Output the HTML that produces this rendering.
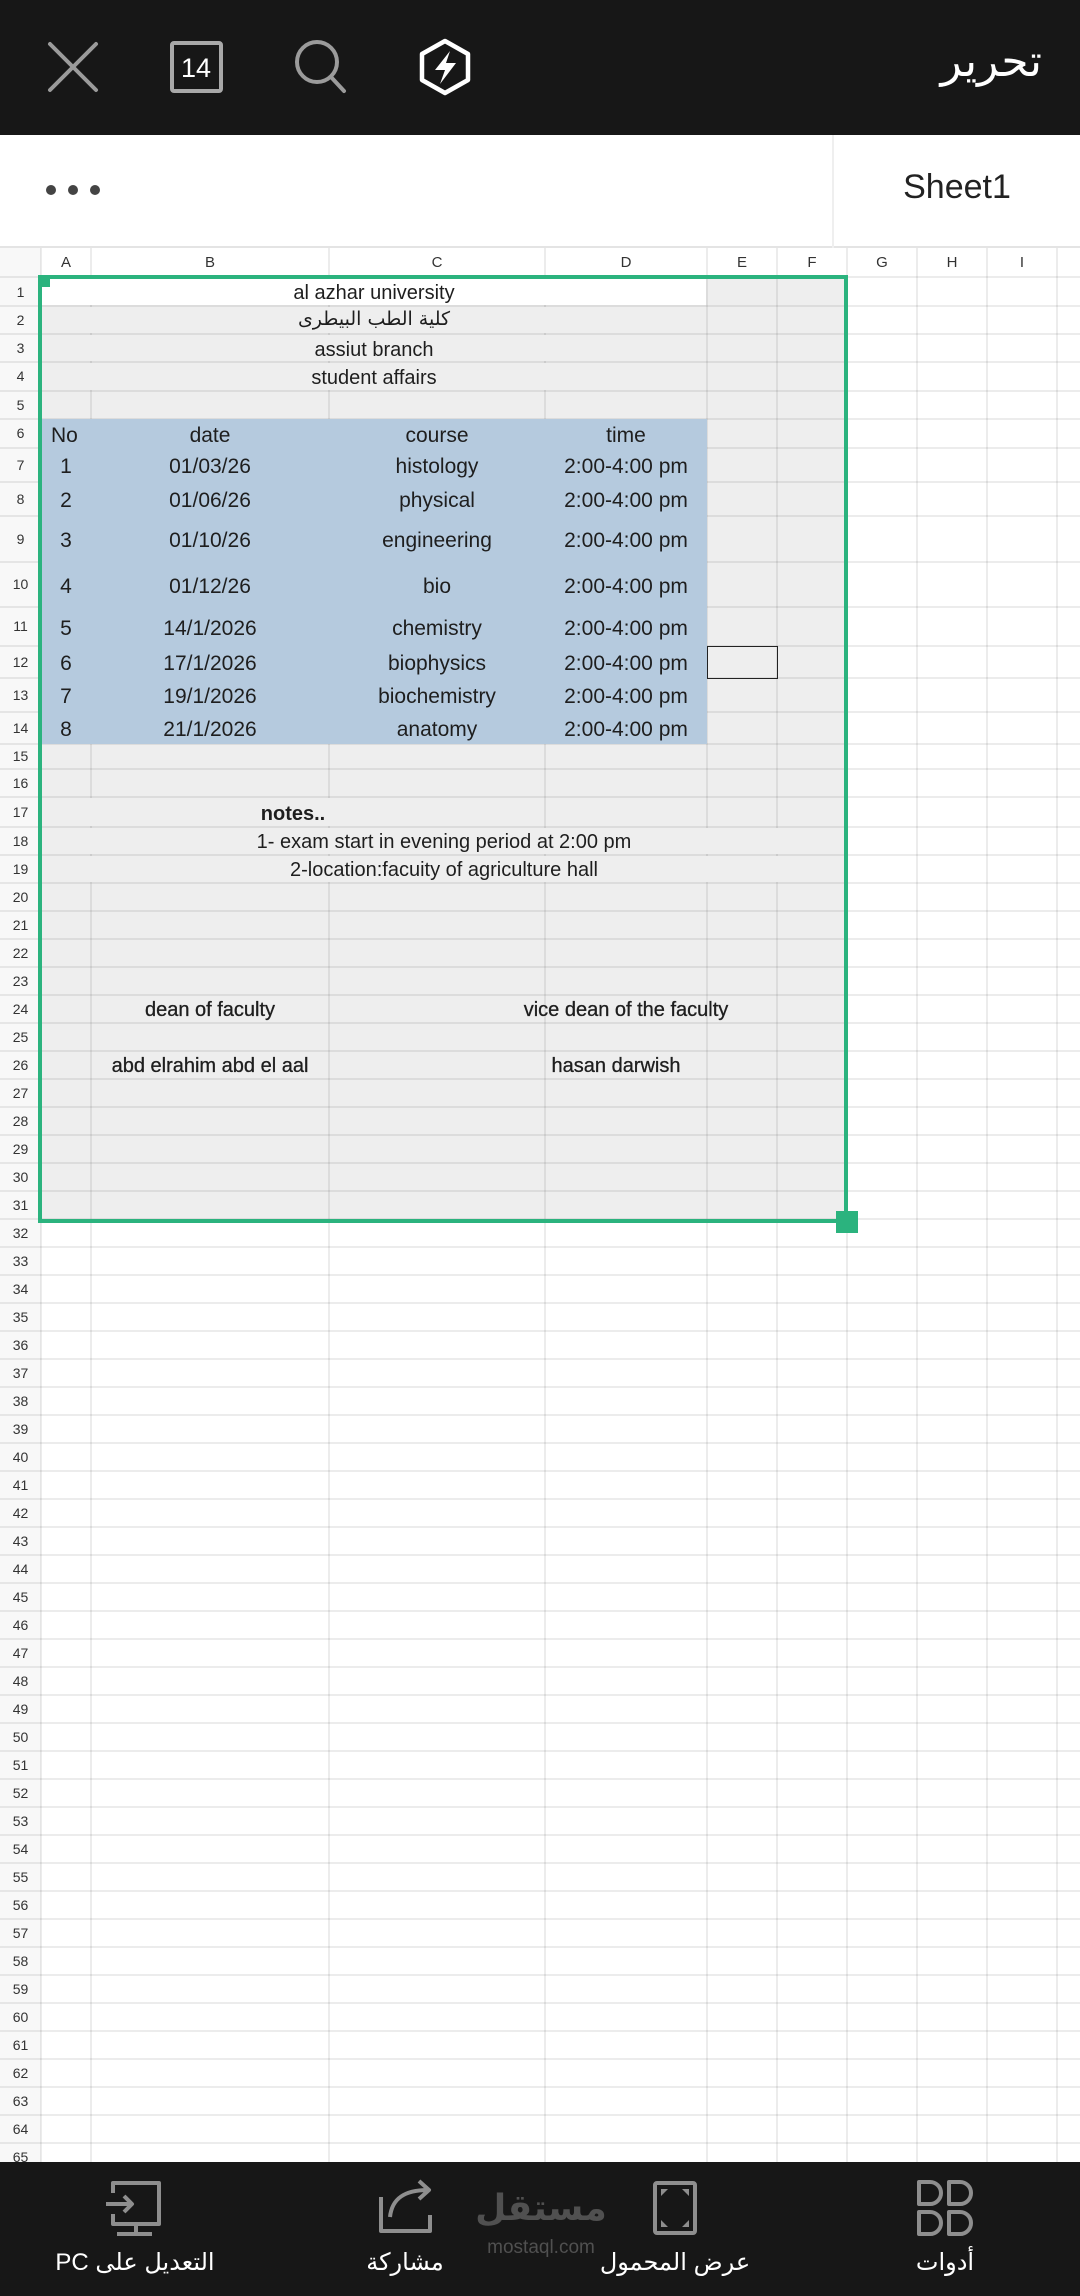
<!DOCTYPE html>
<html><head><meta charset="utf-8">
<style>
*{margin:0;padding:0;box-sizing:border-box}
body{width:1080px;height:2296px;position:relative;overflow:hidden;background:#fff;font-family:"Liberation Sans","DejaVu Sans",sans-serif;color:#222}
.a{position:absolute}
.vl{position:absolute;top:248px;height:1914px;width:2px;background:rgba(0,0,0,.075)}
.hl{position:absolute;left:0;width:1080px;height:2px;background:rgba(0,0,0,.075)}
.rn{position:absolute;left:0;width:41px;text-align:center;font-size:14px;color:#333;height:28px;line-height:28px}
.ch{position:absolute;top:248px;height:29px;line-height:29px;text-align:center;font-size:15px;color:#333}
.t{position:absolute;text-align:center;white-space:nowrap;font-size:21px;color:#1e1e1e}
.lab{position:absolute;top:2248px;font-size:24px;color:#fff;text-align:center;white-space:nowrap;direction:rtl}
</style></head><body>
<div class="a" style="left:0;top:0;width:1080px;height:135px;background:#171717"></div>
<svg class="a" style="left:0;top:0" width="1080" height="135">
<g stroke="#9b9b9b" stroke-width="4" fill="none" stroke-linecap="round">
<line x1="50" y1="44" x2="96" y2="90"/><line x1="96" y1="44" x2="50" y2="90"/>
<rect x="172" y="43" width="49" height="48" rx="2" stroke="#a8a8a8"/>
<circle cx="317" cy="62" r="20"/><line x1="331" y1="77" x2="344" y2="91"/>
</g>
<text x="196" y="77" font-size="27" fill="#fff" text-anchor="middle" font-family="Liberation Sans">14</text>
<polygon points="445,41 468,54 468,80 445,93 422,80 422,54" fill="none" stroke="#fff" stroke-width="4.5" stroke-linejoin="round"/>
<polygon points="450,51 435,70 445,70 440,84 456,63 446,63" fill="#fff"/>
</svg>
<div class="a" style="right:38px;top:36px;font-size:44px;color:#fff;font-family:'DejaVu Sans',sans-serif;direction:rtl">تحرير</div>
<div class="a" style="left:0;top:135px;width:1080px;height:113px;background:#fff;border-bottom:2px solid #e4e4e4"></div>
<div class="a" style="left:832px;top:135px;width:2px;height:113px;background:#efefef"></div>
<svg class="a" style="left:40px;top:180px" width="70" height="20"><circle cx="11" cy="10" r="5" fill="#444"/><circle cx="33" cy="10" r="5" fill="#444"/><circle cx="55" cy="10" r="5" fill="#444"/></svg>
<div class="a" style="left:834px;top:168px;width:246px;text-align:center;font-size:34px;color:#222">Sheet1</div>
<div class="a" style="left:0;top:248px;width:41px;height:1914px;background:#f8f8f8"></div>
<div class="a" style="left:41px;top:278px;width:806px;height:944px;background:#eeeeee"></div>
<div class="vl" style="left:40px"></div><div class="vl" style="left:90px"></div><div class="vl" style="left:328px"></div><div class="vl" style="left:544px"></div><div class="vl" style="left:706px"></div><div class="vl" style="left:776px"></div><div class="vl" style="left:846px"></div><div class="vl" style="left:916px"></div><div class="vl" style="left:986px"></div><div class="vl" style="left:1056px"></div>
<div class="hl" style="top:276px"></div><div class="hl" style="top:305px"></div><div class="hl" style="top:333px"></div><div class="hl" style="top:361px"></div><div class="hl" style="top:390px"></div><div class="hl" style="top:418px"></div><div class="hl" style="top:447px"></div><div class="hl" style="top:481px"></div><div class="hl" style="top:515px"></div><div class="hl" style="top:561px"></div><div class="hl" style="top:606px"></div><div class="hl" style="top:645px"></div><div class="hl" style="top:677px"></div><div class="hl" style="top:711px"></div><div class="hl" style="top:743px"></div><div class="hl" style="top:768px"></div><div class="hl" style="top:796px"></div><div class="hl" style="top:826px"></div><div class="hl" style="top:854px"></div>
<div class="a" style="left:0;top:882px;width:1080px;height:1280px;background:repeating-linear-gradient(to bottom,rgba(0,0,0,.075) 0 2px,transparent 2px 28px)"></div>
<div class="a" style="left:42px;top:278px;width:664px;height:27px;background:#fff"></div>
<div class="a" style="left:42px;top:307px;width:664px;height:26px;background:#eee"></div>
<div class="a" style="left:42px;top:335px;width:664px;height:26px;background:#eee"></div>
<div class="a" style="left:42px;top:363px;width:664px;height:27px;background:#eee"></div>
<div class="a" style="left:41px;top:419px;width:666px;height:325px;background:#b5cade"></div>
<div class="a" style="left:42px;top:798px;width:502px;height:28px;background:#eee"></div>
<div class="a" style="left:42px;top:828px;width:804px;height:26px;background:#eee"></div>
<div class="a" style="left:42px;top:856px;width:804px;height:26px;background:#eee"></div>
<div class="a" style="left:707px;top:646px;width:71px;height:33px;border:1.5px solid #222"></div>
<div class="ch" style="left:41px;width:50px">A</div><div class="ch" style="left:91px;width:238px">B</div><div class="ch" style="left:329px;width:216px">C</div><div class="ch" style="left:545px;width:162px">D</div><div class="ch" style="left:707px;width:70px">E</div><div class="ch" style="left:777px;width:70px">F</div><div class="ch" style="left:847px;width:70px">G</div><div class="ch" style="left:917px;width:70px">H</div><div class="ch" style="left:987px;width:70px">I</div>
<div class="rn" style="top:278px">1</div><div class="rn" style="top:306px">2</div><div class="rn" style="top:334px">3</div><div class="rn" style="top:362px">4</div><div class="rn" style="top:391px">5</div><div class="rn" style="top:419px">6</div>
<div class="rn" style="top:448px;height:34px;line-height:34px">7</div><div class="rn" style="top:482px;height:34px;line-height:34px">8</div><div class="rn" style="top:516px;height:46px;line-height:46px">9</div><div class="rn" style="top:562px;height:45px;line-height:45px">10</div><div class="rn" style="top:607px;height:39px;line-height:39px">11</div><div class="rn" style="top:646px;height:32px;line-height:32px">12</div><div class="rn" style="top:678px;height:34px;line-height:34px">13</div><div class="rn" style="top:712px;height:32px;line-height:32px">14</div>
<div class="rn" style="top:744px;height:25px;line-height:25px">15</div><div class="rn" style="top:769px">16</div><div class="rn" style="top:797px;height:30px;line-height:30px">17</div><div class="rn" style="top:827px">18</div><div class="rn" style="top:855px">19</div>
<div class="rn" style="top:883px">20</div><div class="rn" style="top:911px">21</div><div class="rn" style="top:939px">22</div><div class="rn" style="top:967px">23</div><div class="rn" style="top:995px">24</div><div class="rn" style="top:1023px">25</div><div class="rn" style="top:1051px">26</div><div class="rn" style="top:1079px">27</div><div class="rn" style="top:1107px">28</div><div class="rn" style="top:1135px">29</div><div class="rn" style="top:1163px">30</div><div class="rn" style="top:1191px">31</div><div class="rn" style="top:1219px">32</div><div class="rn" style="top:1247px">33</div><div class="rn" style="top:1275px">34</div><div class="rn" style="top:1303px">35</div><div class="rn" style="top:1331px">36</div><div class="rn" style="top:1359px">37</div><div class="rn" style="top:1387px">38</div><div class="rn" style="top:1415px">39</div><div class="rn" style="top:1443px">40</div><div class="rn" style="top:1471px">41</div><div class="rn" style="top:1499px">42</div><div class="rn" style="top:1527px">43</div><div class="rn" style="top:1555px">44</div><div class="rn" style="top:1583px">45</div><div class="rn" style="top:1611px">46</div><div class="rn" style="top:1639px">47</div><div class="rn" style="top:1667px">48</div><div class="rn" style="top:1695px">49</div><div class="rn" style="top:1723px">50</div><div class="rn" style="top:1751px">51</div><div class="rn" style="top:1779px">52</div><div class="rn" style="top:1807px">53</div><div class="rn" style="top:1835px">54</div><div class="rn" style="top:1863px">55</div><div class="rn" style="top:1891px">56</div><div class="rn" style="top:1919px">57</div><div class="rn" style="top:1947px">58</div><div class="rn" style="top:1975px">59</div><div class="rn" style="top:2003px">60</div><div class="rn" style="top:2031px">61</div><div class="rn" style="top:2059px">62</div><div class="rn" style="top:2087px">63</div><div class="rn" style="top:2115px">64</div><div class="rn" style="top:2143px">65</div>
<div class="t" style="left:41px;width:666px;top:279px;line-height:28px;font-size:20px">al azhar university</div>
<div class="t" style="left:41px;width:666px;top:305px;line-height:28px;font-size:19px;font-family:'DejaVu Sans',sans-serif;direction:rtl">كلية الطب البيطرى</div>
<div class="t" style="left:41px;width:666px;top:336px;line-height:28px;font-size:20px">assiut branch</div>
<div class="t" style="left:41px;width:666px;top:364px;line-height:28px;font-size:20px">student affairs</div>
<div class="t" style="left:51px;top:421px;line-height:29px;text-align:left">No</div>
<div class="t" style="left:91px;width:238px;top:421px;line-height:29px">date</div>
<div class="t" style="left:329px;width:216px;top:421px;line-height:29px">course</div>
<div class="t" style="left:545px;width:162px;top:421px;line-height:29px">time</div>
<div class="a" style="left:41px;top:450px;width:666px;font-size:21px">
<div class="t" style="left:0;width:50px;top:0;line-height:34px">1</div><div class="t" style="left:50px;width:238px;top:0;line-height:34px">01/03/26</div><div class="t" style="left:288px;width:216px;top:0;line-height:34px">histology</div><div class="t" style="left:504px;width:162px;top:0;line-height:34px">2:00-4:00 pm</div>
<div class="t" style="left:0;width:50px;top:34px;line-height:34px">2</div><div class="t" style="left:50px;width:238px;top:34px;line-height:34px">01/06/26</div><div class="t" style="left:288px;width:216px;top:34px;line-height:34px">physical</div><div class="t" style="left:504px;width:162px;top:34px;line-height:34px">2:00-4:00 pm</div>
<div class="t" style="left:0;width:50px;top:68px;line-height:46px">3</div><div class="t" style="left:50px;width:238px;top:68px;line-height:46px">01/10/26</div><div class="t" style="left:288px;width:216px;top:68px;line-height:46px">engineering</div><div class="t" style="left:504px;width:162px;top:68px;line-height:46px">2:00-4:00 pm</div>
<div class="t" style="left:0;width:50px;top:114px;line-height:45px">4</div><div class="t" style="left:50px;width:238px;top:114px;line-height:45px">01/12/26</div><div class="t" style="left:288px;width:216px;top:114px;line-height:45px">bio</div><div class="t" style="left:504px;width:162px;top:114px;line-height:45px">2:00-4:00 pm</div>
<div class="t" style="left:0;width:50px;top:159px;line-height:39px">5</div><div class="t" style="left:50px;width:238px;top:159px;line-height:39px">14/1/2026</div><div class="t" style="left:288px;width:216px;top:159px;line-height:39px">chemistry</div><div class="t" style="left:504px;width:162px;top:159px;line-height:39px">2:00-4:00 pm</div>
<div class="t" style="left:0;width:50px;top:198px;line-height:32px">6</div><div class="t" style="left:50px;width:238px;top:198px;line-height:32px">17/1/2026</div><div class="t" style="left:288px;width:216px;top:198px;line-height:32px">biophysics</div><div class="t" style="left:504px;width:162px;top:198px;line-height:32px">2:00-4:00 pm</div>
<div class="t" style="left:0;width:50px;top:230px;line-height:34px">7</div><div class="t" style="left:50px;width:238px;top:230px;line-height:34px">19/1/2026</div><div class="t" style="left:288px;width:216px;top:230px;line-height:34px">biochemistry</div><div class="t" style="left:504px;width:162px;top:230px;line-height:34px">2:00-4:00 pm</div>
<div class="t" style="left:0;width:50px;top:264px;line-height:32px">8</div><div class="t" style="left:50px;width:238px;top:264px;line-height:32px">21/1/2026</div><div class="t" style="left:288px;width:216px;top:264px;line-height:32px">anatomy</div><div class="t" style="left:504px;width:162px;top:264px;line-height:32px">2:00-4:00 pm</div>
</div>
<div class="t" style="left:41px;width:504px;top:799px;line-height:30px;font-weight:bold;font-size:20px">notes..</div>
<div class="t" style="left:41px;width:806px;top:828px;line-height:28px;font-size:20px">1- exam start in evening period at 2:00 pm</div>
<div class="t" style="left:41px;width:806px;top:856px;line-height:28px;font-size:20px">2-location:facuity of agriculture hall</div>
<div class="t" style="left:91px;width:238px;top:996px;line-height:28px;font-size:20px;-webkit-text-stroke:.3px #1e1e1e">dean of faculty</div>
<div class="t" style="left:475px;width:302px;top:996px;line-height:28px;font-size:20px;-webkit-text-stroke:.3px #1e1e1e">vice dean of the faculty</div>
<div class="t" style="left:91px;width:238px;top:1052px;line-height:28px;font-size:20px;-webkit-text-stroke:.3px #1e1e1e">abd elrahim abd el aal</div>
<div class="t" style="left:465px;width:302px;top:1052px;line-height:28px;font-size:20px;-webkit-text-stroke:.3px #1e1e1e">hasan darwish</div>
<div class="a" style="left:38px;top:275px;width:810px;height:948px;border:4px solid #2bb37e"></div>
<div class="a" style="left:41px;top:278px;width:9px;height:9px;background:#2bb37e"></div>
<div class="a" style="left:836px;top:1211px;width:22px;height:22px;background:#2bb37e"></div>
<div class="a" style="left:0;top:2162px;width:1080px;height:134px;background:#171717"></div>
<svg class="a" style="left:0;top:2162px" width="1080" height="134">
<g stroke="#8e8e8e" stroke-width="4" fill="none" stroke-linejoin="round">
<path d="M113 31 V21 H159 V62 H113 V52"/><path d="M106 42 H132 M124 34 L132 42 L124 50"/><path d="M136 62 V71 M117 72 H152"/>
<path d="M381 35 V69 H430 V53"/><path d="M390 55 C392 36 405 28 428 28 M419 19 L429 28 L419 37"/>
<rect x="655" y="21" width="40" height="50" rx="2"/>
<path d="M919 20 H930 A11 11 0 0 1 930 42 H919 Z"/><path d="M949 20 H960 A11 11 0 0 1 960 42 H949 Z"/>
<path d="M919 50 H930 A11 11 0 0 1 930 72 H919 Z"/><path d="M949 50 H960 A11 11 0 0 1 960 72 H949 Z"/>
</g>
<g fill="#8e8e8e"><path d="M661 27 h7 l-7 7z M689 27 h-7 l7 7z M661 65 h7 l-7 -7z M689 65 h-7 l7 -7z"/></g>
<text x="541" y="58" font-size="36" fill="#505050" text-anchor="middle" font-family="DejaVu Sans" font-weight="bold">مستقل</text>
<text x="541" y="91" font-size="19" fill="#505050" text-anchor="middle" font-family="Liberation Sans">mostaql.com</text>
</svg>
<div class="lab" style="left:40px;width:190px">التعديل على PC</div>
<div class="lab" style="left:345px;width:120px">مشاركة</div>
<div class="lab" style="left:590px;width:170px">عرض المحمول</div>
<div class="lab" style="left:900px;width:90px">أدوات</div>
</body></html>
